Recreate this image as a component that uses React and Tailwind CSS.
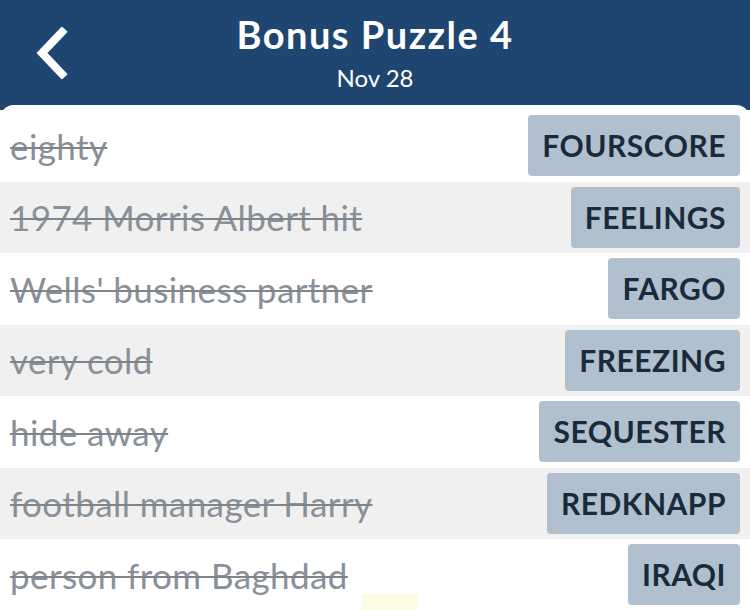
import React from "react";

const rows = [
  ["eighty", "FOURSCORE"],
  ["1974 Morris Albert hit", "FEELINGS"],
  ["Wells' business partner", "FARGO"],
  ["very cold", "FREEZING"],
  ["hide away", "SEQUESTER"],
  ["football manager Harry", "REDKNAPP"],
  ["person from Baghdad", "IRAQI"],
];

export default function App() {
  return (
    <div
      className="w-[750px] h-[610px] overflow-hidden bg-[#1f4571] relative"
      style={{ fontFamily: "Lato, 'Open Sans', sans-serif" }}
    >
      <div className="h-[105px] relative flex flex-col items-center">
        <button className="absolute left-[31px] top-[25px] w-[40px] h-[56px] flex items-center justify-center">
          <svg width="34" height="52" viewBox="0 0 34 52">
            <path d="M28 5 L8 26 L28 47" fill="none" stroke="white" strokeWidth="8" strokeLinecap="square" />
          </svg>
        </button>
        <div className="text-white font-bold text-[38px] leading-none mt-[15px] tracking-[1.5px]">Bonus Puzzle 4</div>
        <div className="text-white text-[24px] leading-none mt-[13px]">Nov 28</div>
      </div>
      <div className="bg-white rounded-t-[14px] pt-[5px]">
        {rows.map(([clue, ans], i) => (
          <div
            key={i}
            className={`h-[71.5px] flex items-center justify-between pl-[10px] pr-[10px] ${i % 2 === 1 ? "bg-[#f0f0f0]" : "bg-white"}`}
          >
            <span className="text-[35px] tracking-[0.4px] text-[#8a9098] line-through decoration-[2px] decoration-[#7d848c]">{clue}</span>
            <span className="h-[61px] px-[14px] flex items-center bg-[#b0c0ce] rounded-[4px] text-[30px] font-bold text-[#1b2a3b] tracking-[0.5px]">
              {ans}
            </span>
          </div>
        ))}
      </div>
      <div className="absolute left-[362px] top-[594px] w-[56px] h-[16px] bg-[#fdfbe6]" />
    </div>
  );
}
